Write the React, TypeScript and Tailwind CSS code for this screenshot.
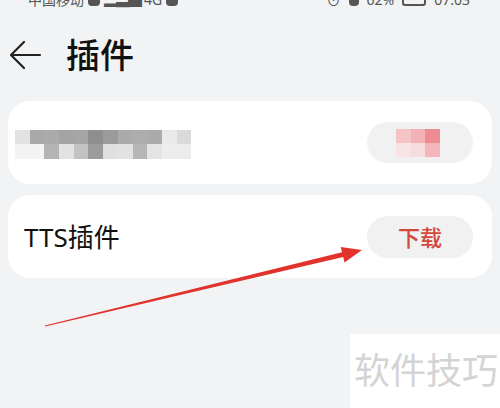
import React from 'react';

const FONT = { fontFamily: '"Noto Sans", "Noto Sans CJK SC", sans-serif' };

// mosaic of the blurred plugin name
const blurRows: string[][] = [
  ['bg-[#e2e2e2]', 'bg-[#a9a9a9]', 'bg-[#ababab]', 'bg-[#a4a4a4]', 'bg-[#a6a6a6]', 'bg-[#8e8e8e]', 'bg-[#9b9b9b]', 'bg-[#ababab]', 'bg-[#adadad]', 'bg-[#ababab]', 'bg-[#eaeaea]', 'bg-[#dadada]'],
  ['bg-[#f4f4f4]', 'bg-[#f4f4f4]', 'bg-[#b4b4b4]', 'bg-[#e2e2e2]', 'bg-[#c2c2c2]', 'bg-[#9c9c9c]', 'bg-[#e0e0e0]', 'bg-[#e2e2e2]', 'bg-[#b6b6b6]', 'bg-[#e4e4e4]', 'bg-[#ededed]', 'bg-[#ececec]'],
];

const pinkRows: string[][] = [
  ['bg-[#f6c4c6]', 'bg-[#f3b3b6]', 'bg-[#ef8b92]'],
  ['bg-[#f8e4e4]', 'bg-[#f6dcdc]', 'bg-[#f4b6bb]'],
];

function Mosaic({ rows, cell }: { rows: string[][]; cell: string }) {
  return (
    <div className="flex flex-col">
      {rows.map((row, i) => (
        <div key={i} className="flex">
          {row.map((c, j) => (
            <div key={j} className={`${cell} ${c}`} />
          ))}
        </div>
      ))}
    </div>
  );
}

export default function App() {
  return (
    <div className="relative w-[500px] h-[408px] overflow-hidden bg-[#f1f3f5]" style={FONT}>
      {/* status bar, cut off at the top */}
      <div className="h-[8px] overflow-hidden flex justify-between px-[28px] text-[14px] leading-[14px] text-[#555]">
        <div className="-mt-[9px] flex items-center gap-1">
          <span>中国移动</span>
          <span className="w-[12px] h-[12px] bg-[#555] rounded-sm" />
          <span className="tracking-[-2px]">▂▃▅</span>
          <span>4G</span>
          <span className="w-[12px] h-[12px] bg-[#555] rounded-sm" />
        </div>
        <div className="-mt-[9px] flex items-center gap-2 pr-[2px]">
          <span>⊙</span>
          <span className="w-[10px] h-[12px] bg-[#555] rounded-sm" />
          <span>62%</span>
          <span className="w-[24px] h-[12px] border-2 border-[#555] rounded-[3px]" />
          <span>07:03</span>
        </div>
      </div>

      {/* header */}
      <div className="h-[93px] flex items-center pl-[10px]">
        <svg width="32" height="30" viewBox="0 0 32 30" fill="none" stroke="#222" strokeWidth="2.2" strokeLinecap="round" strokeLinejoin="round">
          <path d="M1 15 H30 M14 2 L1 15 L14 28" />
        </svg>
        <h1 className="ml-[24px] text-[34px] leading-none font-medium text-[#111]">插件</h1>
      </div>

      {/* plugin list */}
      <div className="flex flex-col gap-[11px] px-[8px]">
        <div className="h-[83px] bg-white rounded-[22px] flex items-center justify-between pl-[7px] pr-[19px]">
          <div className="pt-[3px]">
            <Mosaic rows={blurRows} cell="w-[14.7px] h-[14.5px]" />
          </div>
          <div className="w-[106px] h-[41px] rounded-full bg-[#f1f1f1] flex items-center pl-[29px]">
            <Mosaic rows={pinkRows} cell="w-[14.7px] h-[14px]" />
          </div>
        </div>

        <div className="h-[83px] bg-white rounded-[22px] flex items-center justify-between pl-[16px] pr-[19px]">
          <span className="text-[26px] leading-none text-[#111]">TTS插件</span>
          <button className="w-[106px] h-[42px] rounded-full bg-[#f1f1f1] text-[22px] leading-none text-[#d1493f] font-medium">
            下载
          </button>
        </div>
      </div>

      {/* red annotation arrow */}
      <svg className="absolute inset-0 pointer-events-none" width="500" height="408" viewBox="0 0 500 408">
        <polygon
          points="44.9,325.5 342,252.3 340.7,246.9 362,250 344.5,262.5 343.2,257.1 45.1,326.5"
          fill="#e1332c"
        />
      </svg>

      {/* watermark */}
      <div className="absolute right-0 bottom-0 w-[150px] h-[74px] bg-white flex items-center pl-[4px]">
        <span className="text-[36px] leading-none text-[#d4d4d4]">软件技巧</span>
      </div>
    </div>
  );
}
